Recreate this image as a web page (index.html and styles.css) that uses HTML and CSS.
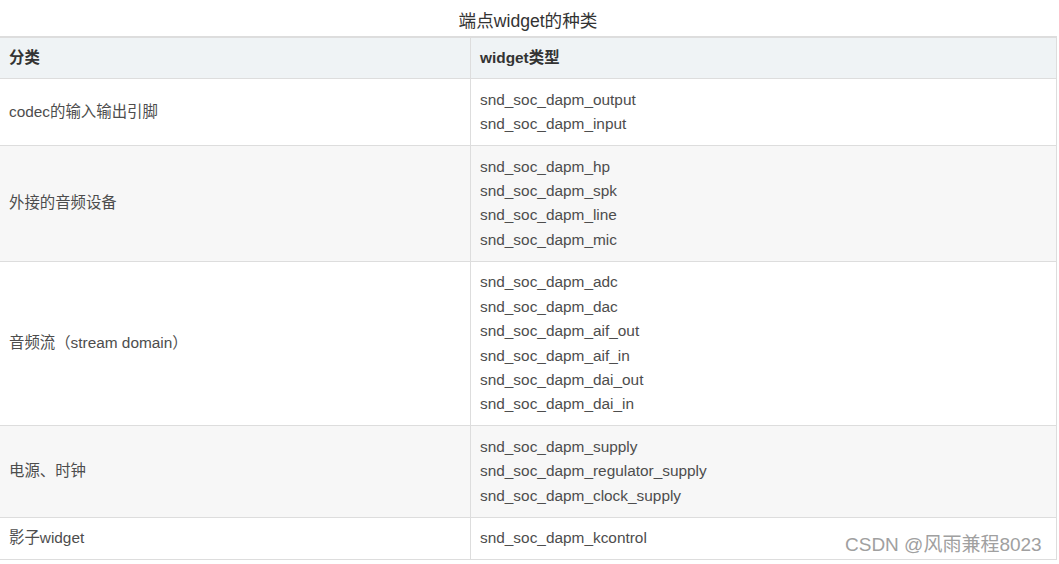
FILE: index.html
```html
<!DOCTYPE html>
<html lang="zh-CN">
<head>
<meta charset="utf-8">
<title>端点widget的种类</title>
<link rel="stylesheet" href="styles.css">
</head>
<body>
<div class="page">
  <table class="widget-table">
    <caption class="title">端点widget的种类</caption>
    <thead>
      <tr><th class="col-cat">分类</th><th>widget类型</th></tr>
    </thead>
    <tbody>
      <tr><td>codec的输入输出引脚</td><td>snd_soc_dapm_output<br>snd_soc_dapm_input</td></tr>
      <tr class="alt"><td>外接的音频设备</td><td>snd_soc_dapm_hp<br>snd_soc_dapm_spk<br>snd_soc_dapm_line<br>snd_soc_dapm_mic</td></tr>
      <tr><td>音频流（stream domain）</td><td>snd_soc_dapm_adc<br>snd_soc_dapm_dac<br>snd_soc_dapm_aif_out<br>snd_soc_dapm_aif_in<br>snd_soc_dapm_dai_out<br>snd_soc_dapm_dai_in</td></tr>
      <tr class="alt"><td>电源、时钟</td><td>snd_soc_dapm_supply<br>snd_soc_dapm_regulator_supply<br>snd_soc_dapm_clock_supply</td></tr>
      <tr><td>影子widget</td><td>snd_soc_dapm_kcontrol</td></tr>
    </tbody>
  </table>
  <div class="watermark">CSDN @风雨兼程8023</div>
</div>
</body>
</html>
```

FILE: styles.css
```css
html, body {
  margin: 0;
  padding: 0;
  background: #fff;
}
body {
  font-family: "Liberation Sans", Arial, "Noto Sans CJK SC", sans-serif;
  color: #4d4d4d;
  overflow: hidden;
}
.page {
  position: relative;
  width: 1059px;
  height: 564px;
}
.widget-table {
  border-collapse: collapse;
  width: 1058px;
  margin-left: -1px;
  table-layout: fixed;
}
.title {
  font-size: 17.6px;
  line-height: 24px;
  padding: 9px 0 3px;
  color: #333;
  text-align: center;
}
.widget-table th,
.widget-table td {
  border: 1px solid #ddd;
  padding: 8.6px 9px;
  font-size: 15.4px;
  line-height: 24.4px;
  text-align: left;
  vertical-align: middle;
}
.widget-table thead th {
  background: #eff3f5;
  font-weight: bold;
  color: #333;
  border-top: 2px solid #ddd;
  padding: 8px 9px;
  line-height: 24px;
}
.widget-table .col-cat {
  width: 452px;
}
.widget-table tr.alt td {
  background: #f7f7f7;
}
.watermark {
  position: absolute;
  left: 845px;
  top: 533px;
  font-size: 19px;
  line-height: 24px;
  color: #a0a0a0;
  text-shadow: 0 0 1px #fff, 0 0 2px #fff;
}
```
